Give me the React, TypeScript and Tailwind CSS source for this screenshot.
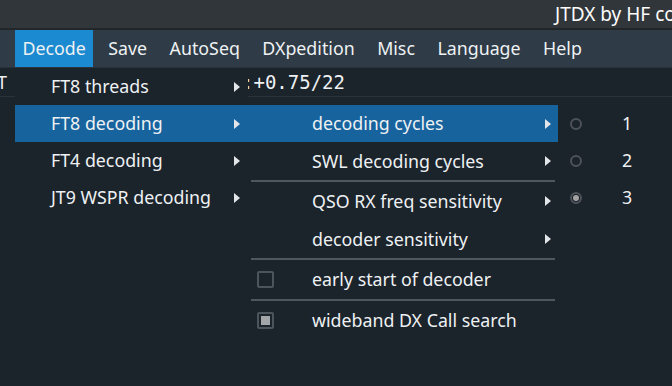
import React from 'react'

const mainItems = ['Decode', 'Save', 'AutoSeq', 'DXpedition', 'Misc', 'Language', 'Help']

const decodeMenu = [
  { label: 'FT8 threads', active: false },
  { label: 'FT8 decoding', active: true },
  { label: 'FT4 decoding', active: false },
  { label: 'JT9 WSPR decoding', active: false },
]

function Arrow() {
  return (
    <svg width="6" height="10" viewBox="0 0 6 10" className="shrink-0">
      <polygon points="0,0 6,5 0,10" fill="#e3e6e9" />
    </svg>
  )
}

function Checkbox({ checked }: { checked?: boolean }) {
  return (
    <span className="flex h-[17px] w-[17px] items-center justify-center rounded-[2px] border-2 border-[#4d555c] p-[2px]">
      {checked && <span className="h-full w-full bg-[#a3a6a9]" />}
    </span>
  )
}

function Radio({ checked }: { checked?: boolean }) {
  return (
    <span className="flex h-[12px] w-[12px] items-center justify-center rounded-full border-2 border-[#4d5358]">
      {checked && <span className="h-[6px] w-[6px] rounded-full bg-[#a3a3a3]" />}
    </span>
  )
}

function Separator() {
  return <div className="mx-[3px] h-[2px] bg-[#4c5760]" />
}

export default function App() {
  return (
    <div className="relative h-[386px] w-[672px] overflow-hidden bg-[#1b232b] font-['Noto_Sans',sans-serif] text-[17.8px] text-[#eef1f3]">
      {/* title bar */}
      <div className="flex h-[28px] items-center overflow-hidden whitespace-nowrap bg-[#31363b] pl-[555px] text-[19px] text-[#fcfcfc]">
        JTDX by HF community
      </div>
      <div className="h-[2px] bg-[#222629]" />

      {/* menu bar */}
      <div className="flex h-[37px] items-center bg-[#2f3b46] pl-[15px]">
        {mainItems.map((item, i) => (
          <div
            key={item}
            className={`flex h-full items-center px-[7.5px] ${i === 0 ? 'bg-[#1b8ad0]' : ''} ${i > 0 ? 'ml-[7.5px]' : ''}`}
          >
            {item}
          </div>
        ))}
      </div>

      {/* field row behind menus */}
      <div className="flex h-[30px] items-center border-y border-[#2a333b] whitespace-nowrap">
        <span className="ml-[-4px] w-[246px] shrink-0 pl-[1px] text-[18px]">T</span>
        <span className="font-['DejaVu_Sans_Mono',monospace] text-[19px]">:+0.75/22</span>
      </div>

      {/* Decode menu */}
      <div className="absolute left-[15px] top-[68px] h-[160px] w-[233px] bg-[#1b232b]">
        {decodeMenu.map((m) => (
          <div
            key={m.label}
            className={`flex h-[37px] items-center pl-[36px] pr-[8px] ${m.active ? 'bg-[#16639e]' : ''}`}
          >
            <span className="flex-1 whitespace-nowrap">{m.label}</span>
            <Arrow />
          </div>
        ))}
      </div>

      {/* FT8 decoding submenu */}
      <div className="absolute left-[248px] top-[105px] w-[310px] bg-[#1b232b]">
        <div className="flex h-[37px] items-center bg-[#16639e] pl-[64px] pr-[7px]">
          <span className="flex-1">decoding cycles</span>
          <Arrow />
        </div>
        <div className="flex h-[38px] items-center pl-[64px] pr-[7px]">
          <span className="flex-1">SWL decoding cycles</span>
          <Arrow />
        </div>
        <Separator />
        <div className="flex h-[38px] items-center pl-[64px] pr-[7px]">
          <span className="flex-1">QSO RX freq sensitivity</span>
          <Arrow />
        </div>
        <div className="flex h-[38px] items-center pl-[64px] pr-[7px]">
          <span className="flex-1">decoder sensitivity</span>
          <Arrow />
        </div>
        <Separator />
        <div className="flex h-[39px] items-center pl-[9px]">
          <Checkbox />
          <span className="ml-[38px]">early start of decoder</span>
        </div>
        <Separator />
        <div className="flex h-[39px] items-center pl-[9px]">
          <Checkbox checked />
          <span className="ml-[38px]">wideband DX Call search</span>
        </div>
      </div>

      {/* decoding cycles submenu */}
      <div className="absolute left-[558px] top-[105px] w-[114px] bg-[#1b232b]">
        {[1, 2, 3].map((n) => (
          <div key={n} className="flex h-[37px] items-center pl-[12px]">
            <Radio checked={n === 3} />
            <span className="ml-[40px]">{n}</span>
          </div>
        ))}
      </div>
    </div>
  )
}
